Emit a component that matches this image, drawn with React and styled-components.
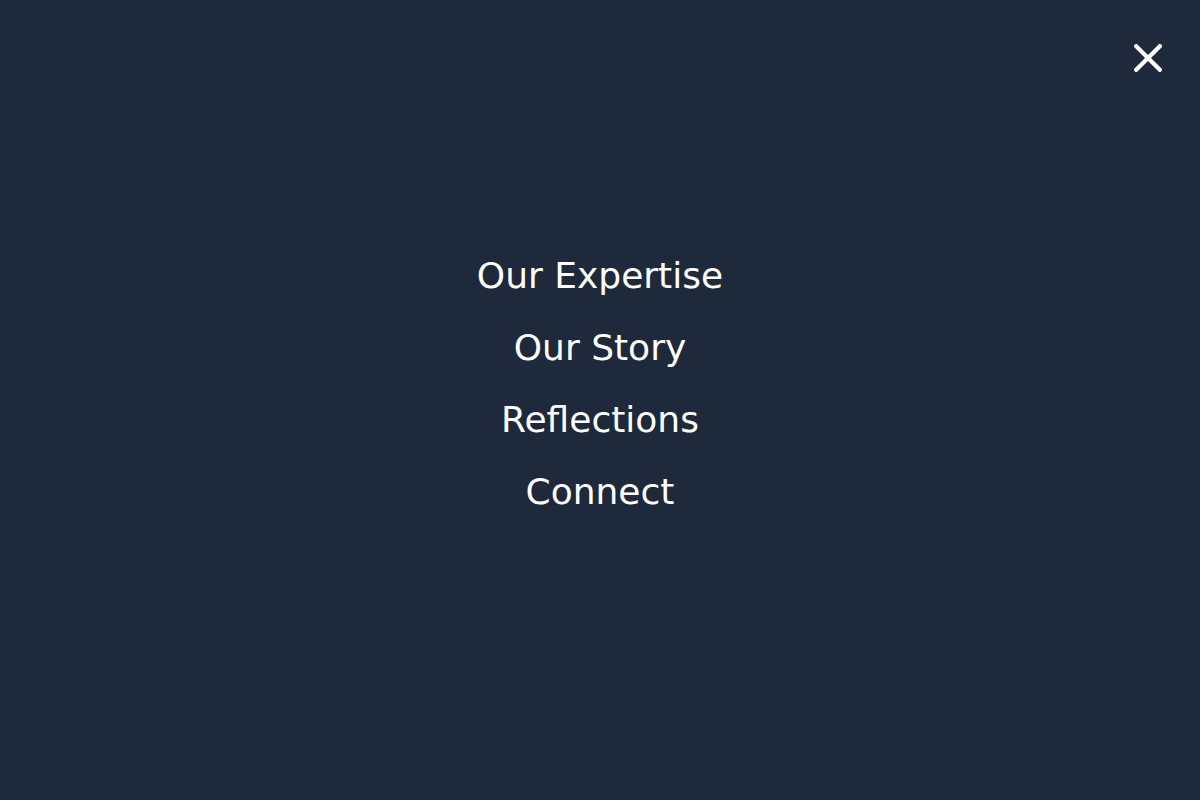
import React from "react";
import styled, { createGlobalStyle } from "styled-components";

const GlobalStyle = createGlobalStyle`
  html, body {
    margin: 0;
    padding: 0;
    background: #1e293b;
  }
  body {
    font-family: "DejaVu Sans", sans-serif;
  }
`;

const Overlay = styled.div`
  position: relative;
  height: 800px;
  box-sizing: border-box;
  padding-bottom: 32px;
  background: #1e293b;
  display: grid;
  place-items: center;
`;

const CloseButton = styled.button`
  position: absolute;
  top: 44px;
  right: 38px;
  width: 28px;
  height: 28px;
  padding: 0;
  border: none;
  background: transparent;
  color: #ffffff;
  cursor: pointer;
  display: flex;

  svg {
    display: block;
  }
`;

const Menu = styled.nav`
  display: flex;
  flex-direction: column;
  align-items: center;
  gap: 32px;
`;

const MenuLink = styled.a`
  font-family: "DejaVu Sans", sans-serif;
  font-size: 36px;
  line-height: 40px;
  color: #ffffff;
  text-decoration: none;
`;

const links = ["Our Expertise", "Our Story", "Reflections", "Connect"];

export default function App() {
  return (
    <>
      <GlobalStyle />
      <Overlay>
        <CloseButton aria-label="Close menu">
          <svg width="28" height="28" viewBox="0 0 28 28" fill="none">
            <path
              d="M2.2 2.2 25.8 25.8M25.8 2.2 2.2 25.8"
              stroke="currentColor"
              strokeWidth="4.2"
              strokeLinecap="square"
            />
          </svg>
        </CloseButton>
        <Menu>
          {links.map((label) => (
            <MenuLink href="#" key={label}>
              {label}
            </MenuLink>
          ))}
        </Menu>
      </Overlay>
    </>
  );
}
